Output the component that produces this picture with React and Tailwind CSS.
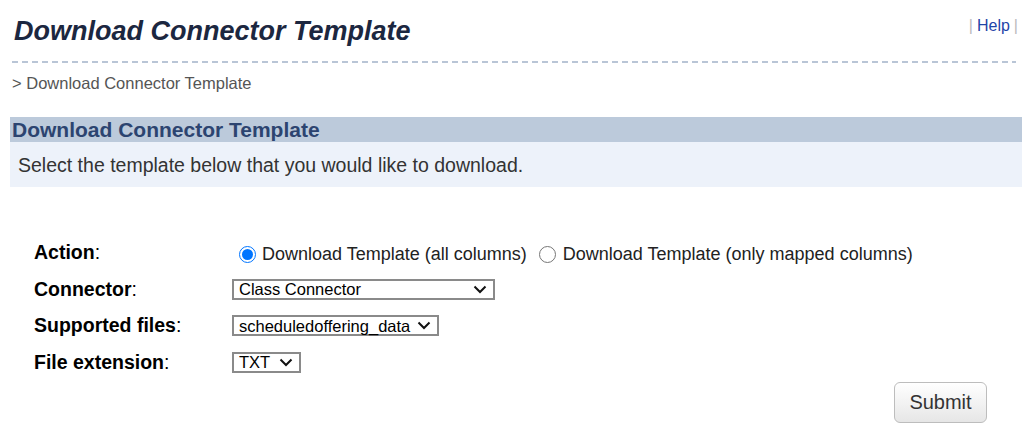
import React from "react";

function Chevron() {
  return (
    <svg width="14" height="9" viewBox="0 0 14 9" className="shrink-0">
      <path d="M1.5 1.5 L7 7 L12.5 1.5" fill="none" stroke="#111" strokeWidth="2" />
    </svg>
  );
}

function FakeSelect({ value, width }) {
  return (
    <div
      className="flex items-center justify-between h-[21px] border-2 border-[#8a8a8a] bg-white pl-[5px] pr-[6px] text-[16.5px] leading-none text-black"
      style={{ width }}
    >
      <span>{value}</span>
      <Chevron />
    </div>
  );
}

function Radio({ checked }) {
  return checked ? (
    <span className="block w-[17px] h-[17px] rounded-full border border-[#0075ff] flex items-center justify-center bg-white shrink-0">
      <span className="block w-[11px] h-[11px] rounded-full bg-[#0075ff]" />
    </span>
  ) : (
    <span className="block w-[17px] h-[17px] rounded-full border border-[#767676] bg-white shrink-0" />
  );
}

export default function App() {
  return (
    <div className="w-[1028px] h-[444px] bg-white overflow-hidden font-['Liberation_Sans',Arial,sans-serif]">
      <div className="flex justify-between items-start pl-[14px] pr-[10px] pt-[16px]">
        <h1 className="text-[27px] leading-[30px] font-bold italic text-[#1c2740]">
          Download Connector Template
        </h1>
        <div className="text-[16px] leading-[18px] pt-[1px]">
          <span className="text-[#bbbbbb]">|</span>
          <span className="text-[#1f45a8] px-[4px]">Help</span>
          <span className="text-[#bbbbbb]">|</span>
        </div>
      </div>
      <div className="mx-[12px] mt-[15px] h-[2px] bg-[linear-gradient(to_right,#b9c5d6_6px,transparent_6px)] bg-[length:10px_2px]" />
      <div className="pl-[12px] mt-[11px] text-[16.5px] leading-[19px] text-[#555555]">
        &gt; Download Connector Template
      </div>
      <div className="ml-[10px] mr-[6px] mt-[24px]">
        <div className="h-[25px] bg-[#bccadb] pl-[2px] flex items-center text-[21px] font-bold text-[#2c4470]">
          Download Connector Template
        </div>
        <div className="h-[45px] bg-[#edf2fa] pl-[8px] pt-[2px] flex items-center text-[19.5px] text-[#333333]">
          Select the template below that you would like to download.
        </div>
      </div>
      <div className="pl-[34px] mt-[48px] text-[19.5px] text-black">
        <div className="flex items-center h-[36px]">
          <div className="w-[198px]"><b>Action</b>:</div>
          <div className="flex items-center pt-[3px] text-[18px]">
            <span className="ml-[7px] mr-[6px]"><Radio checked /></span>
            <span className="text-[#222]">Download Template (all columns)</span>
            <span className="ml-[12px] mr-[7px]"><Radio /></span>
            <span className="text-[#222]">Download Template (only mapped columns)</span>
          </div>
        </div>
        <div className="flex items-center h-[36.5px]">
          <div className="w-[198px]"><b>Connector</b>:</div>
          <FakeSelect value="Class Connector" width={263} />
        </div>
        <div className="flex items-center h-[36.5px]">
          <div className="w-[198px]"><b>Supported files</b>:</div>
          <FakeSelect value="scheduledoffering_data" width={207} />
        </div>
        <div className="flex items-center h-[36.5px]">
          <div className="w-[198px]"><b>File extension</b>:</div>
          <FakeSelect value="TXT" width={69} />
        </div>
      </div>
      <div className="flex justify-end pr-[41px] mt-[1px]">
        <button className="w-[93px] h-[41px] rounded-[6px] border border-[#bdbdbd] bg-[linear-gradient(to_bottom,#ffffff,#e6e6e6)] text-[20px] text-[#333333]">
          Submit
        </button>
      </div>
    </div>
  );
}
